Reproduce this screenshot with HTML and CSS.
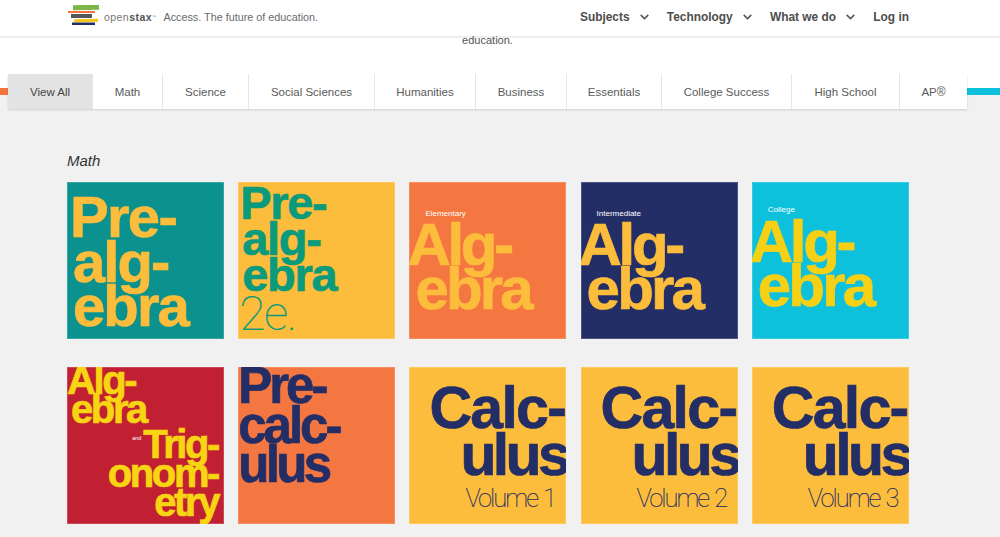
FILE: index.html
```html
<!DOCTYPE html>
<html lang="en">
<head>
<meta charset="utf-8">
<title>OpenStax Subjects</title>
<link rel="stylesheet" href="styles.css">
</head>
<body>
<header class="site-header">
  <div class="brand">
    <svg class="logo" width="35" height="21" viewBox="0 0 35 21" aria-hidden="true">
      <rect x="5" y="0" width="26" height="5" fill="#7ab648" transform="rotate(-1 18 2)"/>
      <rect x="0" y="6" width="27" height="2" fill="#f4743b"/>
      <rect x="3" y="9" width="21" height="4" fill="#53565a"/>
      <rect x="6" y="14" width="24" height="3" fill="#f5c518" transform="rotate(-1 18 15)"/>
      <rect x="4" y="17.5" width="23" height="2.5" fill="#232e66"/>
    </svg>
    <span class="wordmark">open<b>stax</b><sup>™</sup></span>
    <span class="tagline">Access. The future of education.</span>
  </div>
  <nav class="main-nav">
    <a class="nav-item">Subjects<svg class="chev" width="9" height="6" viewBox="0 0 9 6"><path d="M.7 .9 4.5 4.6 8.3 .9" fill="none" stroke="#555" stroke-width="1.5"/></svg></a>
    <a class="nav-item">Technology<svg class="chev" width="9" height="6" viewBox="0 0 9 6"><path d="M.7 .9 4.5 4.6 8.3 .9" fill="none" stroke="#555" stroke-width="1.5"/></svg></a>
    <a class="nav-item">What we do<svg class="chev" width="9" height="6" viewBox="0 0 9 6"><path d="M.7 .9 4.5 4.6 8.3 .9" fill="none" stroke="#555" stroke-width="1.5"/></svg></a>
    <a class="nav-item">Log in</a>
  </nav>
</header>

<section class="hero"><p>education.</p></section>

<div class="filter-band">
  <div class="filters">
    <a class="tab tab-active">View All</a>
    <a class="tab">Math</a>
    <a class="tab">Science</a>
    <a class="tab">Social Sciences</a>
    <a class="tab">Humanities</a>
    <a class="tab">Business</a>
    <a class="tab">Essentials</a>
    <a class="tab">College Success</a>
    <a class="tab">High School</a>
    <a class="tab">AP<sup>®</sup></a>
  </div>
</div>

<main class="catalog">
  <h2 class="subject">Math</h2>
  <div class="covers">
    <div class="cover c-prealg"><span class="first">Pre-</span><span>alg-</span><span>ebra</span></div>
    <div class="cover c-prealg2"><span>Pre-</span><span class="in">alg-</span><span class="in">ebra</span><span class="thin">2e.</span></div>
    <div class="cover c-alg c-elem"><small>Elementary</small><span class="top">Alg-</span><span class="in">ebra</span></div>
    <div class="cover c-alg c-inter"><small>Intermediate</small><span class="top">Alg-</span><span class="in">ebra</span></div>
    <div class="cover c-alg c-coll"><small>College</small><span class="top">Alg-</span><span class="in">ebra</span></div>
    <div class="cover c-trig"><span class="top">Alg-</span><span class="in">ebra</span><span class="right trig"><small>and</small>Trig-</span><span class="right">onom-</span><span class="right">etry</span></div>
    <div class="cover c-precalc"><span class="top">Pre-</span><span class="mid">calc-</span><span class="end">ulus</span></div>
    <div class="cover c-calc"><span class="calc">Calc-</span><span class="ulus">ulus</span><span class="vol">Volume 1</span></div>
    <div class="cover c-calc"><span class="calc">Calc-</span><span class="ulus">ulus</span><span class="vol">Volume 2</span></div>
    <div class="cover c-calc"><span class="calc">Calc-</span><span class="ulus">ulus</span><span class="vol">Volume 3</span></div>
  </div>
</main>
</body>
</html>
```
FILE: styles.css
```css
* { box-sizing: border-box; }
html, body { margin: 0; height: 537px; overflow: hidden; }
body { background: #f1f1f1; font-family: "Liberation Sans", Arial, sans-serif; color: #555; }

.site-header {
  height: 38px;
  background: #fff;
  border-bottom: 2px solid #eeeeee;
  display: flex;
  align-items: center;
  justify-content: space-between;
  padding: 0 91px 2px 68px;
}
.brand { display: flex; align-items: center; }
.logo { display: block; margin-top: -3px; }
.wordmark { margin-left: 1px; font-size: 10.5px; letter-spacing: .45px; color: #777; }
.wordmark b { color: #555; }
.wordmark sup { font-size: 4px; vertical-align: 3px; }
.tagline { margin-left: 7px; font-size: 10.8px; color: #6a6a6a; }
.main-nav { display: flex; gap: 18.3px; }
.nav-item { display: flex; align-items: center; font-size: 11.9px; font-weight: 700; color: #4d4d4d; }
.chev { margin-left: 10px; margin-top: -1px; }

.hero { height: 50px; background: #fff; padding-right: 25px; text-align: center; }
.hero p { margin: 0; font-size: 11px; line-height: 4px; color: #555; }

.filter-band {
  height: 0;
  padding: 0 33px 0 8px;
}
.filter-band::before {
  content: "";
  display: block;
  height: 7px;
  margin: 0 -33px 0 -8px;
  background: linear-gradient(90deg, #f4743b 0 8px, transparent 8px 967px, #0dc0dc 967px);
}
.filters {
  margin-top: -21px;
  height: 35px;
  display: grid;
  grid-template-columns: 84px 70px 86px 126px 101px 91px 95px 130px 108px 68px;
  background: #fff;
  box-shadow: 0 1px 2px rgba(0,0,0,.14);
}
.tab {
  display: flex;
  align-items: center;
  justify-content: center;
  border-left: 1px solid #e6e6e6;
  font-size: 11.5px;
  color: #5a5a5a;
}
.tab:first-child { border-left: 0; }
.tab-active { background: #e3e3e3; color: #444; }
.tab sup { font-size: 12px; line-height: 0; vertical-align: 5px; }

.catalog { padding: 62px 91px 0 67px; }
.subject { margin: 0 0 11px; height: 21px; font-size: 15px; line-height: 21px; font-weight: 400; font-style: italic; color: #333; }
.covers { display: grid; grid-template-columns: repeat(5, 157px); grid-auto-rows: 157px; column-gap: 14.2px; row-gap: 28px; }

.cover { overflow: hidden; font-weight: 700; box-shadow: inset 0 0 0 1px rgba(255,255,255,.18); }
.cover span { display: block; white-space: nowrap; -webkit-text-stroke: .7px currentColor; }
.cover small { display: block; font-weight: 400; font-size: 8px; color: #fff; -webkit-text-stroke: 0; }

.c-prealg { background: #0c928e; color: #fdbd3c; font-size: 58px; line-height: 44.5px; letter-spacing: -1.9px; padding: 13px 0 0 6px; }
.c-prealg .first { margin-left: -3px; letter-spacing: -1.7px; }

.c-prealg2 { background: #fdbd3c; color: #0b9a7c; font-size: 47px; line-height: 36px; letter-spacing: -1.3px; padding: 3px 0 0 2px; }
.c-prealg2 .in { margin-left: 2px; }
.c-prealg2 .thin { font-family: Roboto, sans-serif; font-weight: 100; font-size: 48px; line-height: 40px; letter-spacing: -1.5px; margin-top: 1px; margin-left: -1px; -webkit-text-stroke: .2px currentColor; }

.c-alg { font-size: 60px; line-height: 44px; letter-spacing: -2.8px; }
.c-alg .in { margin-left: 6px; }
.c-alg .top { margin-left: -2px; letter-spacing: -3.3px; }
.c-alg small { letter-spacing: 0; line-height: 10px; margin: 0 0 4px 16px; }
.c-elem { background: #f47641; color: #fdbd3c; padding-top: 27px; }
.c-inter { background: #232e66; color: #fdbd3c; padding-top: 27px; }
.c-coll { background: #0dc0dc; color: #f5d015; padding-top: 23px; }
.c-coll small { margin-bottom: 5px; }

.c-trig { background: #c12032; color: #f7d512; font-size: 40px; line-height: 29px; letter-spacing: -2.4px; }
.c-trig .top { margin-top: -1px; }
.c-trig .in { margin-left: 4px; }
.c-trig .right { text-align: right; padding-right: 6px; }
.c-trig .trig { margin-top: 6px; }
.c-trig .right small { display: inline-block; font-size: 5.5px; letter-spacing: 0; vertical-align: 18px; margin-right: 2px; line-height: 0; }

.c-precalc { background: #f47641; color: #232e66; font-size: 51px; line-height: 39.5px; letter-spacing: -3px; }
.c-precalc .top { margin-top: -1px; }
.c-precalc .end { letter-spacing: -3.6px; }

.c-calc { background: #fdbd3c; color: #232e66; font-size: 59px; line-height: 47px; padding-top: 18px; }
.c-calc .calc { margin-left: 20px; letter-spacing: -1.7px; }
.c-calc .ulus { margin-left: 51px; letter-spacing: -3.6px; }
.c-calc .vol { font-family: Roboto, sans-serif; font-weight: 100; font-size: 25.5px; line-height: 30px; letter-spacing: -2px; word-spacing: 2px; margin-left: 56px; margin-top: 4px; -webkit-text-stroke: .2px currentColor; }
```
